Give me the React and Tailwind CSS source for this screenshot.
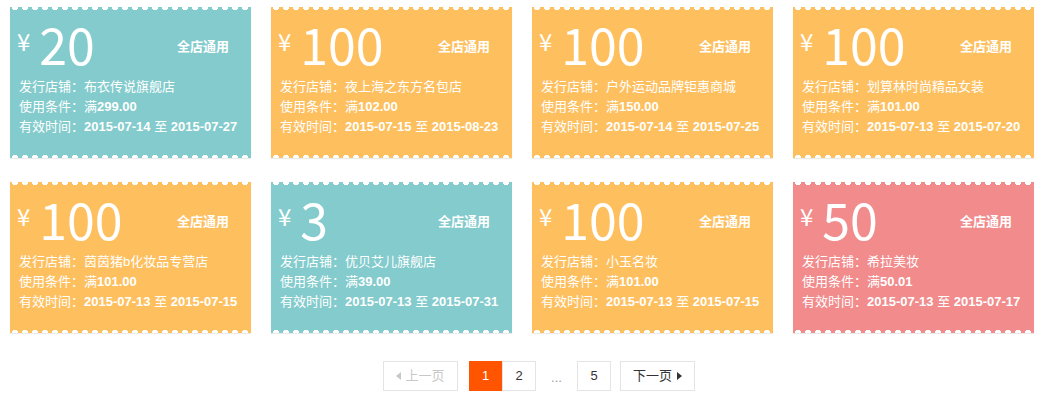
import React from "react";

const coupons = [
  { color: "bg-[#83cbcc]", amount: "20", shop: "布衣传说旗舰店", min: "299.00", from: "2015-07-14", to: "2015-07-27" },
  { color: "bg-[#fec05f]", amount: "100", shop: "夜上海之东方名包店", min: "102.00", from: "2015-07-15", to: "2015-08-23" },
  { color: "bg-[#fec05f]", amount: "100", shop: "户外运动品牌钜惠商城", min: "150.00", from: "2015-07-14", to: "2015-07-25" },
  { color: "bg-[#fec05f]", amount: "100", shop: "划算林时尚精品女装", min: "101.00", from: "2015-07-13", to: "2015-07-20" },
  { color: "bg-[#fec05f]", amount: "100", shop: "茵茵猪b化妆品专营店", min: "101.00", from: "2015-07-13", to: "2015-07-15" },
  { color: "bg-[#83cbcc]", amount: "3", shop: "优贝艾儿旗舰店", min: "39.00", from: "2015-07-13", to: "2015-07-31" },
  { color: "bg-[#fec05f]", amount: "100", shop: "小玉名妆", min: "101.00", from: "2015-07-13", to: "2015-07-15" },
  { color: "bg-[#f18b8c]", amount: "50", shop: "希拉美妆", min: "50.01", from: "2015-07-13", to: "2015-07-17" },
];

const CouponCard = ({ coupon }) => {
  return (
    <div className={`relative h-[151px] ${coupon.color} text-white shadow-[0_1px_1px_rgba(0,0,0,0.08)]`}>
      {/* scalloped edges */}
      <div className="absolute inset-x-0 top-0 h-[4px] bg-[radial-gradient(circle_at_50%_0,#fff_3px,transparent_3.5px)] bg-[length:10px_4px]" />
      <div className="absolute inset-x-0 bottom-0 h-[4px] bg-[radial-gradient(circle_at_50%_100%,#fff_3px,transparent_3.5px)] bg-[length:10px_4px]" />

      <div className="flex h-[70px] items-start pl-[7px] pr-[22px] [font-family:'Noto_Sans_CJK_SC',sans-serif]">
        <span className="mt-[16px] text-[24px] leading-[normal]">¥</span>
        <span className="ml-[9px] text-[50px] leading-[normal]">{coupon.amount}</span>
        <span className="ml-auto mt-[29px] text-[13px] font-bold leading-[20px]">全店通用</span>
      </div>

      <div className="pl-[9px] text-[13px] leading-[20px] [font-family:'Liberation_Sans','Noto_Sans_CJK_SC',sans-serif]">
        <div>发行店铺：{coupon.shop}</div>
        <div>
          使用条件：满<span className="font-bold">{coupon.min}</span>
        </div>
        <div>
          有效时间：<span className="font-bold">{coupon.from}</span> 至{" "}
          <span className="font-bold">{coupon.to}</span>
        </div>
      </div>
    </div>
  );
};

const App = () => {
  return (
    <div className="min-h-[394px] w-[1047px] bg-white [font-family:'Liberation_Sans','Noto_Sans_CJK_SC',sans-serif]">
      <div className="grid grid-cols-[repeat(4,241px)] gap-x-[20px] gap-y-[24px] pl-[10px] pt-[7px]">
        {coupons.map((coupon, idx) => (
          <CouponCard key={idx} coupon={coupon} />
        ))}
      </div>

      {/* pagination */}
      <div className="mt-[28px] flex items-center justify-center pl-[31px] text-[13px]">
        <span className="flex h-[30px] w-[75px] items-center justify-center border border-[#e4e4e4] text-[#c8c8c8]">
          <span className="mr-[4px] h-0 w-0 border-y-[4px] border-r-[5px] border-y-transparent border-r-[#c8c8c8]" />
          上一页
        </span>
        <span className="ml-[11px] flex h-[30px] w-[33px] items-center justify-center bg-[#ff5500] text-white">1</span>
        <span className="flex h-[30px] w-[34px] items-center justify-center border border-[#e4e4e4] text-[#333]">2</span>
        <span className="mx-[8px] flex h-[30px] w-[25px] items-end justify-center pb-[7px] text-[#999] leading-none">...</span>
        <span className="flex h-[30px] w-[34px] items-center justify-center border border-[#e4e4e4] text-[#333]">5</span>
        <span className="ml-[9px] flex h-[30px] w-[75px] items-center justify-center border border-[#e4e4e4] text-[#333]">
          下一页
          <span className="ml-[5px] h-0 w-0 border-y-[4px] border-l-[5px] border-y-transparent border-l-[#333]" />
        </span>
      </div>
    </div>
  );
};

export default App;
